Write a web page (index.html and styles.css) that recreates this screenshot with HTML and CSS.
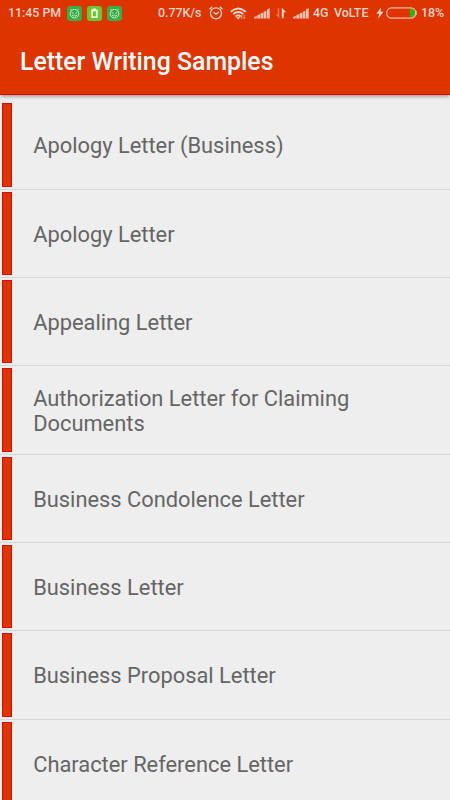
FILE: index.html
```html
<!DOCTYPE html>
<html lang="en">
<head>
  <meta charset="UTF-8" />
  <meta name="viewport" content="width=device-width, initial-scale=1.0"/>
  <title>Letter Writing Samples</title>
  <link rel="stylesheet" href="styles.css">
</head>
<body>
  <div class="status-bar">
    <span class="time">11:45 PM</span>
    <div class="notifications">
      <svg class="badge" viewBox="0 0 15 15">
        <rect width="15" height="15" rx="3" fill="#36ae45"/>
        <g fill="none" stroke="#c9efc9" stroke-width="1">
          <circle cx="7.5" cy="7.7" r="4.3"/>
          <path d="M4.7 4.5L3.5 3M10.3 4.5l1.2-1.5M4.8 6.6l1.7.8M10.2 6.6l-1.7.8M5 9.2l1.3.9 1.2-.9 1.2.9 1.3-.9"/>
        </g>
      </svg>
      <svg class="badge" viewBox="0 0 15 15">
        <rect width="15" height="15" rx="3" fill="#68c92e"/>
        <path d="M6 3.5V2.5h3v1h1.7v8.5H4.3V3.5z" fill="#effbe8"/>
        <path d="M6 5.3h3v5H6z" fill="#68c92e"/>
      </svg>
      <svg class="badge" viewBox="0 0 15 15">
        <rect width="15" height="15" rx="3" fill="#36ae45"/>
        <g fill="none" stroke="#c9efc9" stroke-width="1">
          <circle cx="7.5" cy="7.7" r="4.3"/>
          <path d="M4.7 4.5L3.5 3M10.3 4.5l1.2-1.5M4.8 6.6l1.7.8M10.2 6.6l-1.7.8M5 9.2l1.3.9 1.2-.9 1.2.9 1.3-.9"/>
        </g>
      </svg>
    </div>
    <div class="system">
      <span class="speed">0.77K/s</span>
      <svg class="alarm" viewBox="0 0 14 14">
        <g fill="none" stroke="#ffd6cc" stroke-width="1.3">
          <circle cx="7" cy="7.3" r="5.5"/>
          <path d="M.5 3.2L3.3.8M13.5 3.2L10.7.8M4.5 6.2L7 8.1l2.8-2"/>
        </g>
      </svg>
      <svg class="wifi" viewBox="0 0 17 13">
        <g fill="none" stroke="#ffd6cc" stroke-width="1.8">
          <path d="M.7 4.7q7.5-6.5 15 0M3.1 7.1q5.1-4.2 10.2 0M5.4 9.5q2.8-2.2 5.4 0"/>
        </g>
        <path d="M6.1 10.5q2.1-1.2 4.100 0L8.200 12.600z" fill="#ffd6cc"/>
        <path d="M11.5 12V8.2M14.2 7.5v4.2M10.4 9.4l1.1-1.3 1 1.3M13.1 10.5l1.1 1.3 1.1-1.3" fill="none" stroke="#f3a38f" stroke-width=".9"/>
      </svg>
      <svg class="signal" viewBox="0 0 17 12">
        <path d="M0 11.5V10l2.8-1v2.5zM3.3 11.5V8.3L6.2 7.1v4.4zM6.7 11.5V6.5l2.6-1v6zM9.8 11.5V4.7l2.6-1v7.8zM13 11.5V2.5L15.7 1v10.5z" fill="#ffc3b6"/>
      </svg>
      <svg class="data" viewBox="0 0 12 12">
        <path d="M4.2 1v10.2L.7 7.5h2.1V1z" fill="#ee7b60"/>
        <path d="M6.8 11.2V.8l4.4 4.4H8.7v6z" fill="#ffd6cc"/>
      </svg>
      <svg class="signal second" viewBox="0 0 17 12">
        <path d="M0 11.5V10l2.8-1v2.5zM3.3 11.5V8.3L6.2 7.1v4.4zM6.7 11.5V6.5l2.6-1v6zM9.8 11.5V4.7l2.6-1v7.8zM13 11.5V2.5L15.7 1v10.5z" fill="#ffc3b6"/>
      </svg>
      <span class="network">4G</span>
      <span class="volte">VoLTE</span>
      <svg class="bolt" viewBox="0 0 8 12">
        <path d="M5.2.3L.4 6.8h2.8L2 11.7l5.5-7H4.4z" fill="#ffd6cc"/>
      </svg>
      <svg class="battery" viewBox="0 0 31 12">
        <path d="M24 1.5h1.5c2 0 2.7 1.4 3.7 4.5-1 3.1-1.7 4.5-3.7 4.5H24z" fill="#1fbd0b"/>
        <rect x=".8" y=".9" width="28.8" height="10.2" rx="4.7" fill="none" stroke="#ffb5a5" stroke-width="1.2"/>
        <path d="M30.3 4v4" stroke="#ffb5a5"/>
      </svg>
      <span class="percent">18%</span>
    </div>
  </div>

  <header class="toolbar">
    <h1>Letter Writing Samples</h1>
  </header>

  <ul class="list">
    <li class="item"><span>Apology Letter (Business)</span></li>
    <li class="item"><span>Apology Letter</span></li>
    <li class="item"><span>Appealing Letter</span></li>
    <li class="item"><span>Authorization Letter for Claiming Documents</span></li>
    <li class="item"><span>Business Condolence Letter</span></li>
    <li class="item"><span>Business Letter</span></li>
    <li class="item"><span>Business Proposal Letter</span></li>
    <li class="item"><span>Character Reference Letter</span></li>
  </ul>
</body>
</html>
```
FILE: styles.css
```css
*, *::before { margin: 0; padding: 0; box-sizing: border-box; }
html, body { height: 100%; overflow: hidden; }
body {
  display: flex;
  flex-direction: column;
  font-family: Roboto, "Liberation Sans", sans-serif;
  background-color: #eeeeee;
}

.status-bar {
  flex: none;
  display: flex;
  align-items: center;
  height: 26px;
  padding: 0 8px;
  background-color: #de3400;
  color: #ffd6cc;
  font-size: 12.35px;
  font-weight: 500;
  white-space: nowrap;
}
.status-bar svg, .status-bar span { display: block; flex: none; }
.time { width: 59px; }
.notifications { display: flex; flex: none; gap: 5px; }
.badge { width: 15px; height: 15px; }
.system {
  display: flex;
  flex: none;
  align-items: center;
  margin-left: 36px;
}
.speed { width: 51px; }
.alarm { width: 14px; height: 14px; margin-right: 7px; }
.wifi { width: 17px; height: 13px; margin-right: 7px; }
.signal { width: 17px; height: 12px; margin-right: 4px; }
.data { width: 12px; height: 12px; margin-right: 6px; }
.signal.second { margin-right: 3px; }
.network { width: 21px; }
.volte { width: 42px; }
.bolt { width: 8px; height: 12px; margin-right: 2px; }
.battery { width: 31px; height: 12px; margin-right: 4px; }

.toolbar {
  flex: none;
  display: flex;
  align-items: center;
  height: 69px;
  padding: 0 20px;
  background-color: #de3400;
  border-bottom: 1px solid #e00000;
  box-shadow: 0 3px 3px -1px rgba(0, 0, 0, 0.3);
}
.toolbar h1 {
  padding-top: 2px;
  color: #ffffff;
  font-size: 24.85px;
  font-weight: 500;
}

.list {
  list-style: none;
  padding-top: 6.4px;
}
.item {
  display: flex;
  align-items: center;
  height: 88.33px;
  padding: 2px 60px 2px 2px;
  border-bottom: 1px solid #d6d6d6;
  color: #656565;
  font-size: 21.85px;
  line-height: 25.5px;
}
.item span { padding-top: 2px; }
/* red strip on the left of every row */
.item::before {
  content: "";
  flex: none;
  align-self: stretch;
  width: 10px;
  margin-right: 21.2px;
  background-color: #de3400;
  border: 1px solid #e00a00;
}
```
